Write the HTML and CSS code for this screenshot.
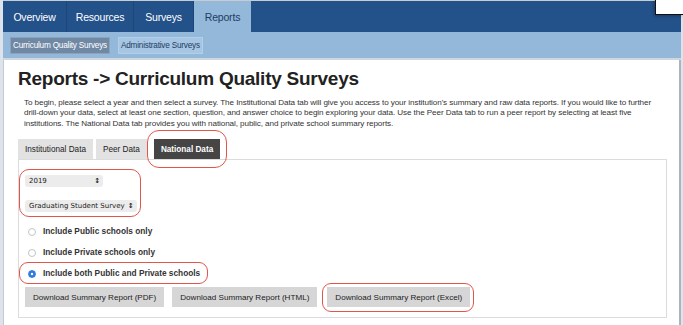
FILE: index.html
```html
<!DOCTYPE html>
<html lang="en">
<head>
    <meta charset="UTF-8">
    <title>Reports - Curriculum Quality Surveys</title>
    <link rel="stylesheet" href="styles.css">
</head>
<body>
    <div class="page">
        <!-- Top navigation -->
        <nav class="topnav">
            <a class="topnav-tab">Overview</a>
            <a class="topnav-tab">Resources</a>
            <a class="topnav-tab">Surveys</a>
            <a class="topnav-tab active">Reports</a>
        </nav>
        <div class="subnav">
            <a class="subnav-btn active">Curriculum Quality Surveys</a>
            <a class="subnav-btn">Administrative Surveys</a>
        </div>

        <!-- Main content -->
        <main class="content">
            <h1>Reports -&gt; Curriculum Quality Surveys</h1>
            <p class="intro">To begin, please select a year and then select a survey. The Institutional Data tab will give you access to your institution's summary and raw data reports. If you would like to further drill-down your data, select at least one section, question, and answer choice to begin exploring your data. Use the Peer Data tab to run a peer report by selecting at least five institutions. The National Data tab provides you with national, public, and private school summary reports.</p>

            <div class="tabs">
                <a class="tab">Institutional Data</a>
                <a class="tab">Peer Data</a>
                <a class="tab active marked">National Data</a>
            </div>

            <div class="panel">
                <div class="selects marked">
                    <div class="select">2019 <span class="arrows">&#x2195;</span></div>
                    <div class="select">Graduating Student Survey <span class="arrows">&#x2195;</span></div>
                </div>

                <div class="radios">
                    <label class="radio"><span class="dot"></span>Include Public schools only</label>
                    <label class="radio"><span class="dot"></span>Include Private schools only</label>
                    <label class="radio checked marked"><span class="dot"></span>Include both Public and Private schools</label>
                </div>

                <div class="buttons">
                    <button class="btn">Download Summary Report (PDF)</button>
                    <button class="btn">Download Summary Report (HTML)</button>
                    <button class="btn marked">Download Summary Report (Excel)</button>
                </div>
            </div>
        </main>
    </div>
    <div class="corner-box"></div>
</body>
</html>
```

FILE: styles.css
```css
* {
    margin: 0;
    padding: 0;
    box-sizing: border-box;
}

body {
    font-family: "Liberation Sans", Arial, sans-serif;
    background-color: #dde3ea;
    color: #222;
    height: 325px;
    overflow: hidden;
}

.page {
    margin: 0 2px 0 3px;
    border-top: 1px solid #c8ccd0;
}

/* Top navigation */
.topnav {
    display: flex;
    height: 31px;
    background-color: #23518a;
}

.topnav-tab {
    display: flex;
    align-items: center;
    justify-content: center;
    height: 100%;
    color: #ffffff;
    font-size: 10.5px;
    letter-spacing: -0.2px;
    border-right: 1px solid #1d4677;
}

.topnav-tab:nth-child(1) { width: 64px; }
.topnav-tab:nth-child(2) { width: 67px; }
.topnav-tab:nth-child(3) { width: 60px; }
.topnav-tab:nth-child(4) { width: 57px; }

.topnav-tab.active {
    background-color: #93b8da;
    color: #1f3d63;
    border-right: none;
}

.subnav {
    display: flex;
    gap: 8px;
    align-items: center;
    height: 28px;
    padding-left: 7px;
    background-color: #93b8da;
    border-bottom: 2px solid #cfd6dd;
}

.subnav-btn {
    font-size: 8.2px;
    letter-spacing: -0.2px;
    padding: 3px 2px;
    color: #1f3d63;
    background-color: #a6c6e4;
    border: 1px solid #b2cfe9;
}

.subnav-btn.active {
    background-color: #6f88a4;
    color: #ffffff;
    border-color: #8ea3ba;
}

/* Content */
.content {
    background-color: #ffffff;
    border-left: 1px solid #c3c9cf;
    border-right: 2px solid #aab4bf;
    padding: 7px 12px 10px 14px;
    height: 265px;
}

h1 {
    font-size: 19px;
    font-weight: bold;
    color: #222;
    letter-spacing: -0.25px;
    line-height: 24px;
    margin-bottom: 7px;
}

.intro {
    font-size: 8.1px;
    letter-spacing: -0.08px;
    line-height: 10.4px;
    color: #333;
    margin: 0 0 10px 6px;
}

/* Tabs */
.tabs {
    display: flex;
    gap: 3px;
}

.tab {
    font-size: 8.2px;
    padding: 6px 7px 5px;
    color: #222;
    background-color: #e2e2e2;
}

.tab.active {
    margin-left: 4px;
    background-color: #454545;
    color: #ffffff;
    font-weight: bold;
}

.panel {
    border: 1px solid #dcdcdc;
    height: 159px;
    padding: 15px 6px 6px;
}

/* Selects */
.selects {
    display: flex;
    flex-direction: column;
    align-items: flex-start;
    width: max-content;
    gap: 13px;
    margin-bottom: 13px;
}

.select {
    display: flex;
    justify-content: space-between;
    align-items: center;
    font-family: "DejaVu Sans", sans-serif;
    font-size: 7px;
    color: #222;
    background-color: #ececec;
    border-radius: 3px;
    height: 12px;
    padding: 0 3px 0 4px;
    gap: 3px;
}

.select:first-child {
    width: 78px;
}

.arrows {
    font-size: 7px;
    font-weight: bold;
}

/* Radios */
.radios {
    display: flex;
    flex-direction: column;
    gap: 10px;
    margin-bottom: 9px;
}

.radio {
    display: flex;
    align-items: center;
    font-size: 8.3px;
    font-weight: bold;
    color: #333;
    height: 11px;
    width: max-content;
    padding-left: 3px;
    padding-right: 4px;
}

.dot {
    width: 8px;
    height: 8px;
    border-radius: 50%;
    border: 1px solid #c4c4c4;
    margin-right: 7px;
    margin-top: 3px;
}

.radio.checked .dot {
    border-color: #2f7de1;
    background: radial-gradient(circle, #ffffff 0 1.2px, #2f7de1 1.6px);
}

/* Buttons */
.buttons {
    display: flex;
    gap: 8px;
}

.btn {
    font-family: "Liberation Sans", Arial, sans-serif;
    font-size: 8.1px;
    color: #222;
    background-color: #d6d6d6;
    border: none;
    height: 20px;
    padding: 0 8px;
}

.buttons .btn.marked {
    margin-left: 2px;
}

/* Red annotation rings */
.marked {
    position: relative;
}

.marked::after {
    content: '';
    position: absolute;
    border: 1.5px solid #e2554d;
    border-radius: 12px;
    pointer-events: none;
}

.tab.marked::after {
    top: -9px;
    bottom: -9px;
    left: -7px;
    right: -7px;
}

.selects.marked::after {
    top: -6px;
    bottom: -5px;
    left: -6px;
    right: -4px;
    border-radius: 10px;
}

.radio.marked::after {
    top: -5px;
    bottom: -6px;
    left: -6px;
    right: -4px;
    border-radius: 9px;
}

.btn.marked::after {
    top: -4px;
    bottom: -5px;
    left: -5px;
    right: -4px;
    border-radius: 9px;
}

/* Overlapping box in the top right corner */
.corner-box {
    position: absolute;
    top: 0;
    right: 0;
    width: 28px;
    height: 15px;
    background-color: #ffffff;
    border-left: 1px solid #111;
    border-bottom: 1px solid #111;
    box-shadow: -1px 1px 3px rgba(0, 0, 0, 0.3);
}
```
